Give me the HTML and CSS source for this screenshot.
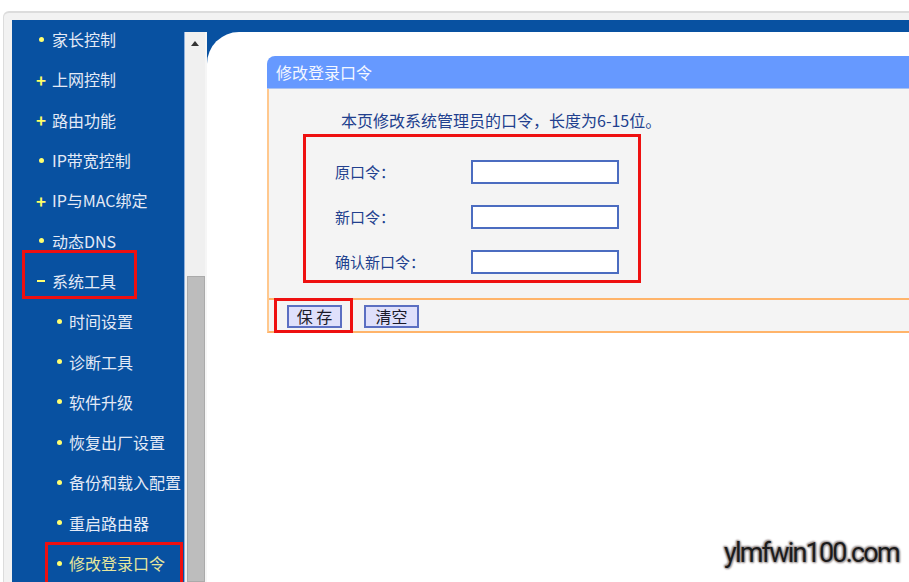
FILE: index.html
```html
<!DOCTYPE html>
<html lang="zh-CN">
<head>
<meta charset="utf-8">
<title>修改登录口令</title>
<link rel="stylesheet" href="styles.css">
</head>
<body>
<div class="frame">
  <div class="shell">
    <nav class="side">
      <ul class="menu">
        <li class="item"><span class="mk dot"></span><span>家长控制</span></li>
        <li class="item"><span class="mk plus">+</span><span>上网控制</span></li>
        <li class="item"><span class="mk plus">+</span><span>路由功能</span></li>
        <li class="item"><span class="mk dot"></span><span>IP带宽控制</span></li>
        <li class="item"><span class="mk plus">+</span><span>IP与MAC绑定</span></li>
        <li class="item"><span class="mk dot"></span><span>动态DNS</span></li>
        <li class="item"><span class="mk minus"></span><span>系统工具</span></li>
        <li class="item sub"><span class="mk dot"></span><span>时间设置</span></li>
        <li class="item sub"><span class="mk dot"></span><span>诊断工具</span></li>
        <li class="item sub"><span class="mk dot"></span><span>软件升级</span></li>
        <li class="item sub"><span class="mk dot"></span><span>恢复出厂设置</span></li>
        <li class="item sub"><span class="mk dot"></span><span>备份和载入配置</span></li>
        <li class="item sub"><span class="mk dot"></span><span>重启路由器</span></li>
        <li class="item sub active"><span class="mk dot"></span><span>修改登录口令</span></li>
      </ul>
    </nav>
    <div class="scroll">
      <div class="arrow"></div>
      <div class="thumb"></div>
    </div>
    <main class="main">
      <section class="panel">
        <div class="ptitle">修改登录口令</div>
        <div class="pbody">
          <p class="desc">本页修改系统管理员的口令，长度为6-15位。</p>
          <div class="rows">
            <div class="row"><span class="lbl">原口令：</span><span class="inp"></span></div>
            <div class="row"><span class="lbl">新口令：</span><span class="inp"></span></div>
            <div class="row"><span class="lbl">确认新口令：</span><span class="inp"></span></div>
          </div>
          <div class="foot">
            <span class="btn">保 存</span>
            <span class="btn">清空</span>
          </div>
        </div>
      </section>
    </main>
  </div>
</div>
<div class="mark m-sys"></div>
<div class="mark m-pwd"></div>
<div class="mark m-form"></div>
<div class="mark m-save"></div>
<div class="wm">ylmfwin100.com</div>
</body>
</html>
```

FILE: styles.css
```css
* { box-sizing: border-box; }
html, body { margin: 0; padding: 0; }
body {
  width: 909px;
  height: 582px;
  overflow: hidden;
  background: #ffffff;
  font-family: "Noto Sans CJK SC", "Noto Sans", sans-serif;
  position: relative;
}
.frame {
  margin: 11px 0 0 3px;
  height: 571px;
  border-top: 2px solid #dcdcdc;
  border-left: 1px solid #dcdcdc;
  border-top-left-radius: 6px;
  background: #f2f2f2;
  padding: 7px 0 0 8px;
}
.shell {
  height: 562px;
  background: #0851a1;
  display: flex;
  padding-top: 12px;
  overflow: hidden;
}
.side {
  width: 172px;
  flex: none;
  overflow: hidden;
}
.menu {
  list-style: none;
  margin: -13px 0 0 0;
  padding: 0;
}
.item {
  height: 40.3px;
  display: flex;
  align-items: center;
  padding-left: 23px;
  color: #e4eaf6;
  font-size: 16px;
  white-space: nowrap;
}
.item:first-child { margin-top: -1px; }
.item.sub { padding-left: 41px; }
.item.active { color: #e6e69c; }
.mk {
  width: 12px;
  flex: none;
  margin-right: 5px;
  display: flex;
  justify-content: center;
  align-items: center;
  color: #ffff66;
}
.item.sub .mk { margin-right: 4px; }
.dot::before {
  content: "";
  width: 5px;
  height: 5px;
  border-radius: 50%;
  background: #ffff70;
}
.plus {
  font-size: 17px;
  font-weight: bold;
  line-height: 1;
}
.minus::before {
  content: "";
  width: 8px;
  height: 2px;
  background: #ffff70;
}
.scroll {
  width: 23px;
  flex: none;
  background: #f0f0f0;
  border-left: 1px solid #8fb0dc;
  border-right: 2px solid #f6f6f6;
  display: flex;
  flex-direction: column;
  justify-content: space-between;
  align-items: center;
}
.arrow {
  margin-top: 9px;
  width: 0;
  height: 0;
  border-left: 4px solid transparent;
  border-right: 4px solid transparent;
  border-bottom: 5px solid #333333;
}
.thumb {
  width: 18px;
  height: 306px;
  background: #bdbdbd;
  border: 1px solid #aaaaaa;
  margin-left: 1px;
}
.main {
  flex: 1;
  background: #ffffff;
  border-top-left-radius: 32px 32px;
  padding: 24px 0 0 60px;
  overflow: hidden;
}
.panel {
  width: 700px;
}
.ptitle {
  height: 33px;
  background: #6699ff;
  border-top-left-radius: 8px;
  border-bottom: 1px solid #a9c2f2;
  color: #f4f7ff;
  font-size: 16px;
  line-height: 32px;
  padding-left: 9px;
}
.pbody {
  background: #f4f4f4;
  border-left: 2px solid #ffc88e;
  border-bottom: 2px solid #ffb46a;
}
.desc {
  margin: 0;
  padding: 21px 0 0 72px;
  line-height: 20px;
  font-size: 16px;
  color: #213f8e;
}
.rows {
  padding: 19px 0 0 66px;
}
.row {
  height: 45px;
  display: flex;
  align-items: center;
}
.lbl {
  width: 136px;
  flex: none;
  font-size: 15px;
  color: #213f8e;
}
.inp {
  width: 148px;
  height: 24px;
  background: #ffffff;
  border: 2px solid #4b6cc0;
}
.foot {
  margin-top: 14px;
  border-top: 2px solid #ffb46a;
  height: 33px;
  display: flex;
  align-items: flex-start;
  gap: 22px;
  padding: 5px 0 0 18px;
}
.btn {
  width: 55px;
  height: 23px;
  background: #dfe0fb;
  border: 2px solid #5b6fc2;
  font-size: 16px;
  line-height: 19px;
  color: #1a1a2a;
  text-align: center;
}
.mark {
  position: absolute;
  border: 3px solid #ee1010;
}
.m-sys { left: 22px; top: 250px; width: 115px; height: 49px; }
.m-pwd { left: 45px; top: 542px; width: 138px; height: 50px; }
.m-form { left: 303px; top: 134px; width: 338px; height: 149px; }
.m-save { left: 274px; top: 298px; width: 79px; height: 35px; }
.wm {
  position: absolute;
  left: 724px;
  top: 533px;
  font-family: Roboto, "Open Sans", sans-serif;
  font-size: 27px;
  line-height: 40px;
  letter-spacing: -1.8px;
  color: #1c1c1c;
  text-shadow: 0 0 2px #9a9090, 0 0 2px #9a9090, 0 0 3px #a59e9e, 1px 1px 2px #a59e9e, -1px -1px 2px #a59e9e;
}
```
